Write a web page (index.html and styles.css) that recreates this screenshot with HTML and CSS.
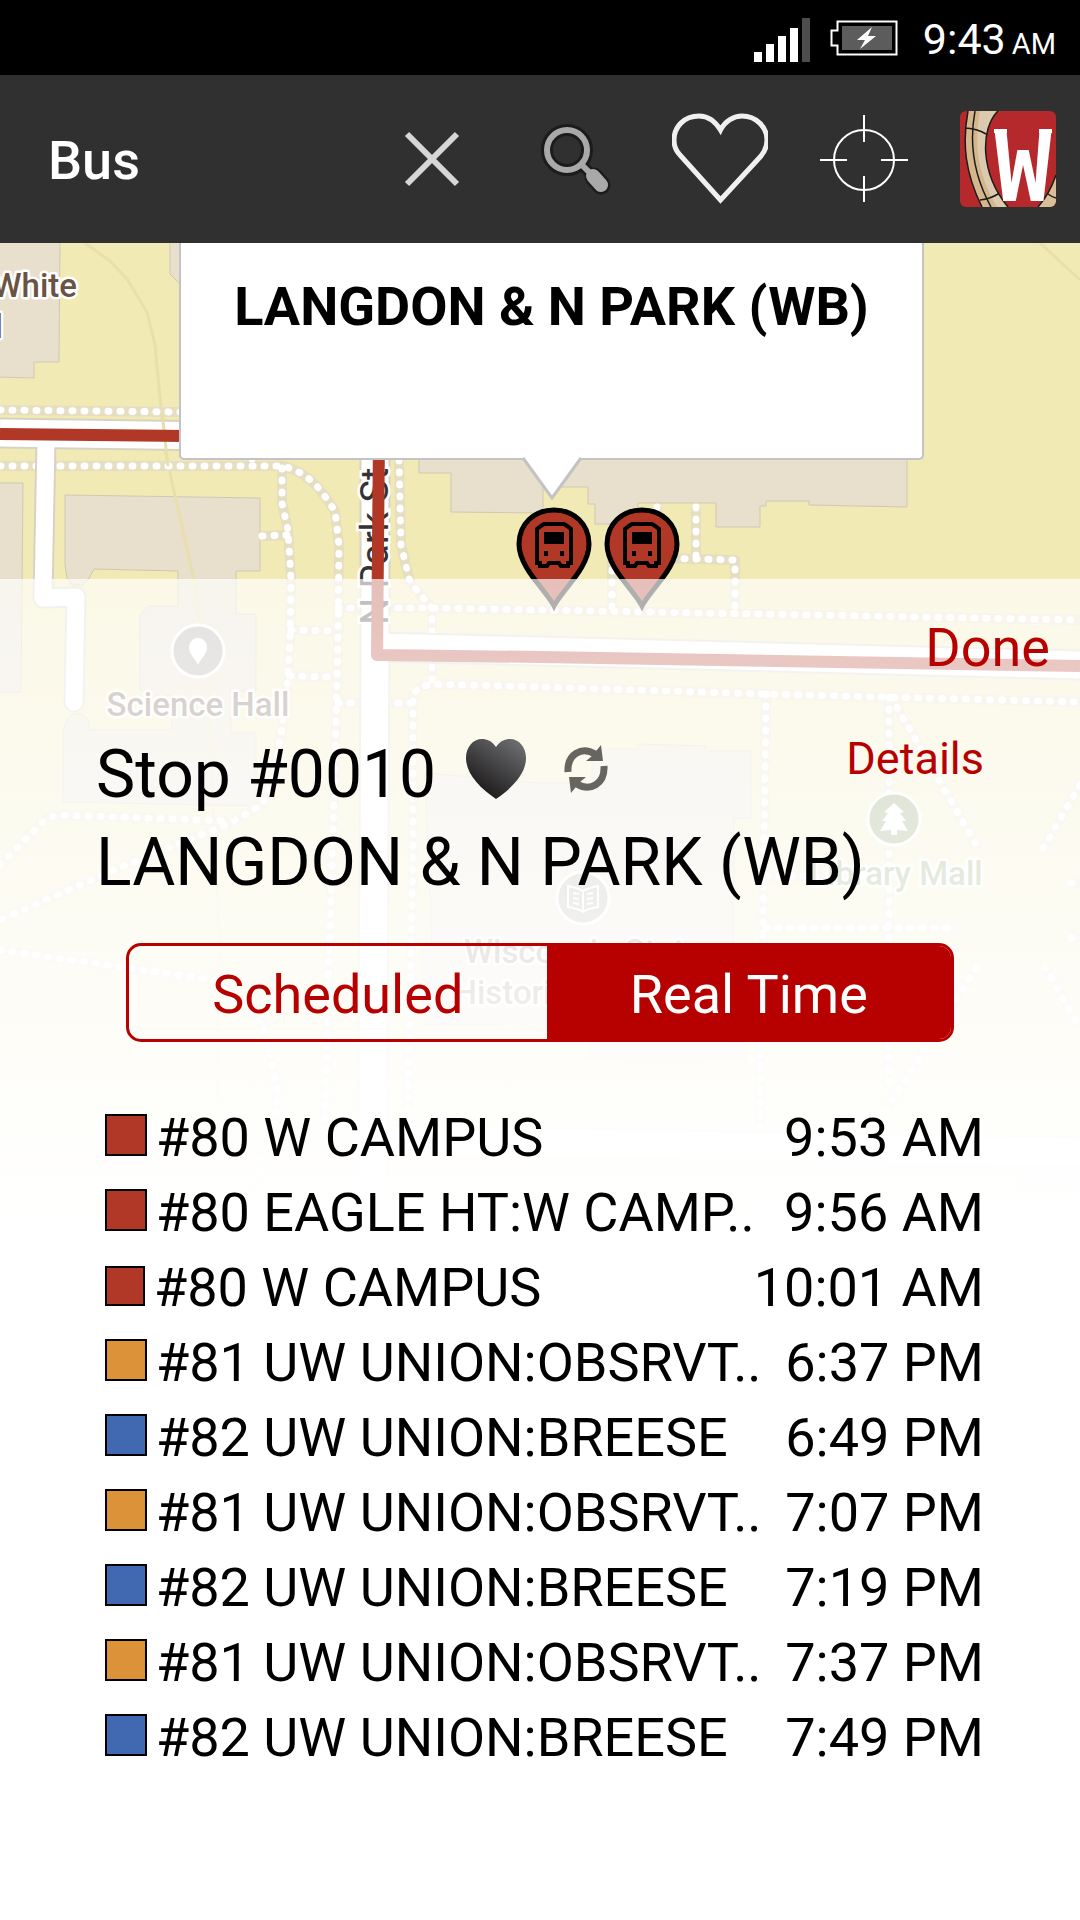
FILE: index.html
```html
<!DOCTYPE html>
<html lang="en">
<head>
  <meta charset="UTF-8" />
  <meta name="viewport" content="width=device-width, initial-scale=1.0"/>
  <title>Bus</title>
  <link rel="stylesheet" href="styles.css">
</head>
<body>
  <div class="status-bar">
    <svg class="signal" width="56" height="44" viewBox="0 0 56 44" aria-hidden="true">
      <path fill="#fff" d="M0 34h8v10H0zM12 26h8v18h-8zM24 18h8v26h-8zM36 10h8v34h-8z"/>
      <path fill="#4d4d4d" d="M48 0h8v44h-8z"/>
    </svg>
    <svg class="battery" width="68" height="36" viewBox="0 0 68 36" aria-hidden="true">
      <path d="M7.500 1.500h59v33h-59v-9h-6v-15h6z" fill="none" stroke="#fff" stroke-width="2"/>
      <path d="M12 6h50v24H12z" fill="#5c5c5c"/>
      <path d="M42 7L27 20h8l-5 9 16-13h-8z" fill="#fff"/>
    </svg>
    <span class="clock">9:43 <small>AM</small></span>
  </div>

  <header class="top-bar">
    <h1>Bus</h1>
    <button type="button" aria-label="Close">
      <svg viewBox="0 0 96 96"><path d="M23 23L73 73M73 23L23 73" stroke="#d6d6d6" stroke-width="6"/></svg>
    </button>
    <button type="button" aria-label="Search">
      <svg viewBox="0 0 96 96">
        <g fill="none" stroke="#1c1c1c">
          <circle cx="39" cy="39" r="20" stroke-width="12"/>
          <path d="M54 54l10 10" stroke-width="11"/>
          <path d="M66 66l7 8" stroke-width="19" stroke-linecap="round"/>
        </g>
        <g fill="none" stroke="#a9a9a9">
          <circle cx="39" cy="39" r="20" stroke-width="6"/>
          <path d="M54 54l10 10" stroke-width="6"/>
          <path d="M65 65l8 9" stroke-width="14" stroke-linecap="round"/>
        </g>
      </svg>
    </button>
    <button type="button" aria-label="Favorites">
      <svg viewBox="0 0 96 96"><path d="M48.500 19C43 10 35 5 27 5C12 5 2 16 2 29C2 35 4 40 8 44L48.500 89L89 45C93 40 95 35 95 29C95 16 84 5 70 5C62 5 53 10 48.500 19Z" fill="none" stroke="#f0f0f0" stroke-width="5"/></svg>
    </button>
    <button type="button" aria-label="Locate me">
      <svg viewBox="0 0 96 96"><g fill="none" stroke="#fff" stroke-width="2"><circle cx="48" cy="49" r="30"/><path d="M48 4v27M48 65v26M4 49h27M65 49h27"/></g></svg>
    </button>
    <button type="button" aria-label="Home">
      <svg class="crest" viewBox="0 0 96 96">
        <path d="M0 0h96v96H0z" fill="#b5282c"/>
        <path d="M8 0C2 32 5 62 22 96H48C20 62 20 18 38 0Z" fill="#d4b68c"/>
        <path d="M20 0C14 32 17 62 37 96H46C22 64 20 22 36 0Z" fill="#dccaae"/>
        <path d="M96 64C92 76 86 87 78 96H96Z" fill="#d8bf98"/>
        <path d="M8 0C2 32 5 62 22 96M15 0C9 32 14 65 31 96M38 0C20 18 20 62 48 96M96 64C92 76 86 87 78 96M6 17Q18 18 26 23M20 89Q30 88 38 83M88 83Q92 86 96 87" fill="none" stroke="#1d1a1a" stroke-width="1.500"/>
        <path d="M34 18h13v4H34zM79 18h13v4H79z" fill="#fff"/>
        <text class="crest-letter" x="63" y="90" text-anchor="middle">W</text>
      </svg>
    </button>
  </header>

  <main class="screen">
    <svg class="map" viewBox="0 0 1080 1677" role="img" aria-label="Campus map">
      <!-- map units are screen units, with the top 243 taken by the bars -->
      <g transform="translate(0 -243)">
        <path d="M0 243H1080V1920H0Z" fill="#f2eab4"/>

        <g class="building">
          <path d="M-4 240H60L59 362H34V378L-4 377Z"/>
          <path d="M170 240V274L182 286V240Z"/>
          <path d="M-4 483H23L21 692H-4Z"/>
          <path d="M65 495L260 498V571H236V614H256V691H231V733H256V806L63 802V732L67 720L72 714H83L88 720L90 730H172V695H150L140 690V614L149 606H178V571L94 569L88 580L83 585H72L67 578L65 565Z"/>
          <path d="M419 450V473H451V512L543 513V487H588V504H595V524H638V503H716V527H760V506H766V501H809V505L907 507V450Z"/>
          <path d="M425 773L540 783H592V749H638V744L706 746V751H751V818H734L733 1042H746V1060H703V1064H629V1059H589V1042L501 1020V1025H422V950H432Z"/>
          <path d="M1018 1163H1080V1300H1018Z"/>
        </g>

        <path class="contour" d="M85 243L110 261L127 279L147 312L155 345L165 450L176 500L194 580L208 680L213 800L219 930L218 1100M1040 243L1080 280"/>

        <defs>
          <g id="paths">
            <path d="M0 410L180 412"/>
            <path d="M0 466H282C300 470 313 480 324 495L335 511L339 545L338 640L334 800L328 1000L325 1130"/>
            <path d="M252 458V467M282 468V503L288 530L291 580L290 640L287 690L281 735L273 780L262 805L228 824L114 870L0 920"/>
            <path d="M262 536L288 535"/>
            <path d="M0 865L47 818L60 815L228 821"/>
            <path d="M399 460L401 545L410 582L432 608V684"/>
            <path d="M338 608H430L540 610L1080 620"/>
            <path d="M291 630L338 631"/>
            <path d="M290 676L336 677"/>
            <path d="M338 703H412"/>
            <path d="M408 1110L413 850V694L420 687L432 684L540 687L765 694L1080 702"/>
            <path d="M657 507V556H612V610"/>
            <path d="M696 507V558M660 558L735 560V612"/>
            <path d="M766 694L763 925L760 1130"/>
            <path d="M766 928H948"/>
            <path d="M889 697V1090"/>
            <path d="M891 697L978 848"/>
            <path d="M1080 785L1042 850"/>
            <path d="M976 968L885 1112"/>
            <path d="M1045 967L1080 1028"/>
            <path d="M767 876H889"/>
            <path d="M1071 883H1080M1071 938H1080"/>
            <path d="M0 950L214 980L262 1022L278 1090L276 1120L250 1190"/>
          </g>
          <g id="streets">
            <path d="M0 433L375 438"/>
            <path d="M375 440V640L372 1260"/>
            <path d="M375 647L540 651L1080 665"/>
            <path d="M380 1140L1080 1152"/>
          </g>
        </defs>
        <use href="#paths" class="path-bed"/>
        <use href="#paths" class="path-dots"/>

        <path class="lane lane-edge" d="M46 440L43 598L76 597L74 702"/>
        <use href="#streets" class="street-edge"/>
        <path class="lane" d="M46 440L43 598L76 597L74 702"/>
        <use href="#streets" class="street"/>
        <path class="contour" d="M162 412L168 466"/>

        <text class="street-name" transform="translate(388 625) rotate(-90)">N Park St</text>

        <path class="route" d="M0 434L379 438L377 655L540 657L1080 666"/>

        <g class="place">
          <text x="77" y="297" text-anchor="end">White</text>
          <text x="3" y="338" text-anchor="end">Hall</text>
          <text x="198" y="716" text-anchor="middle">Science Hall</text>
          <text x="583" y="963" text-anchor="middle">Wisconsin State</text>
          <text x="583" y="1004" text-anchor="middle">Historical Society</text>
          <text class="park" x="896" y="885" text-anchor="middle">Library Mall</text>
        </g>

        <g stroke="#fff" stroke-width="3">
          <circle cx="198" cy="651" r="26" fill="#aca6a2"/>
          <circle cx="583" cy="898" r="26" fill="#9f9a96"/>
          <circle cx="894" cy="819" r="26" fill="#6b8845"/>
        </g>
        <path d="M198 638C192 638 189 643 189 648C189 654 195 658 198 665C201 658 207 654 207 648C207 643 204 638 198 638Z" fill="#fff"/>
        <path d="M583 891C578 888 572 887 568 886V907C574 908 579 909 583 912C587 909 592 908 598 907V886C594 887 588 888 583 891ZM583 891V911M573 893L579 894M573 898L579 899M573 903L579 904M593 893L587 894M593 898L587 899M593 903L587 904" fill="none" stroke="#fff" stroke-width="2"/>
        <path d="M894 803L904 812L900 813L906 821H902L908 831L897 830V835H891V830L880 831L886 821H882L888 813L884 812Z" fill="#fff"/>

        <defs>
          <g id="pin">
            <path d="M0 98C-8 82 -35 60 -35 36C-35 16 -20 2 0 2S35 16 35 36C35 60 8 82 0 98Z" fill="#b13726" stroke="#000" stroke-width="5"/>
            <path d="M-13 18L-10 16H10L13 18L17 21V55H14V58H7L5 55H-5L-7 58H-14V55H-17V21Z" fill="none" stroke="#000" stroke-width="4"/>
            <path d="M-10 24H10V36H-10Z"/>
            <path d="M-10 43H-6V48H-10ZM6 43H10V48H6Z"/>
          </g>
        </defs>
        <use href="#pin" x="554" y="508"/>
        <use href="#pin" x="642" y="508"/>
      </g>
    </svg>

    <div class="popup">
      <h2>LANGDON &amp; N PARK (WB)</h2>
      <svg class="popup-tip" width="60" height="44" viewBox="0 0 60 44" aria-hidden="true"><path d="M1 1L30 41L59 1" fill="#fff" stroke="#c3c3c3" stroke-width="3"/></svg>
    </div>

    <section class="sheet">
      <div class="sheet-top">
        <button type="button" class="done">Done</button>
      </div>

      <div class="stop">
        <div class="stop-line">
          <span>Stop #0010</span>
          <button type="button" aria-label="Add to favorites">
            <svg width="60" height="60" viewBox="0 0 60 60">
              <defs>
                <linearGradient id="heart" x1="0.200" y1="0.900" x2="0.800" y2="0">
                  <stop offset="0" stop-color="#1b1718"/>
                  <stop offset="1" stop-color="#6b6d6f"/>
                </linearGradient>
              </defs>
              <path d="M30 8C26 2 21 0 16 0C7 0 0 8 0 19C0 35 14 49 30 60C46 49 60 35 60 19C60 8 53 0 44 0C39 0 34 2 30 8Z" fill="url(#heart)"/>
            </svg>
          </button>
          <button type="button" class="refresh" aria-label="Refresh">
            <svg width="44" height="48" viewBox="0 0 44 48">
              <path d="M4 27C3 9 18 1 31 9M40 21C41 39 26 47 13 39" fill="none" stroke="#666560" stroke-width="7"/>
              <path d="M37 0L39 16H22L28 11ZM7 48L5 32H22L16 37Z" fill="#666560"/>
            </svg>
          </button>
          <a class="details" href="#details">Details</a>
        </div>
        <div class="stop-name">LANGDON &amp; N PARK (WB)</div>
      </div>

      <div class="tabs">
        <button type="button">Scheduled</button>
        <button type="button" class="active">Real Time</button>
      </div>

      <table class="times">
        <tr><td><i class="swatch red"></i>#80 W CAMPUS</td><td>9:53 AM</td></tr>
        <tr><td><i class="swatch red"></i>#80 EAGLE HT:W CAMP..</td><td>9:56 AM</td></tr>
        <tr><td><i class="swatch red small"></i>#80 W CAMPUS</td><td>10:01 AM</td></tr>
        <tr><td><i class="swatch orange"></i>#81 UW UNION:OBSRVT..</td><td>6:37 PM</td></tr>
        <tr><td><i class="swatch blue"></i>#82 UW UNION:BREESE</td><td>6:49 PM</td></tr>
        <tr><td><i class="swatch orange"></i>#81 UW UNION:OBSRVT..</td><td>7:07 PM</td></tr>
        <tr><td><i class="swatch blue"></i>#82 UW UNION:BREESE</td><td>7:19 PM</td></tr>
        <tr><td><i class="swatch orange"></i>#81 UW UNION:OBSRVT..</td><td>7:37 PM</td></tr>
        <tr><td><i class="swatch blue"></i>#82 UW UNION:BREESE</td><td>7:49 PM</td></tr>
      </table>
    </section>
  </main>
</body>
</html>
```
FILE: styles.css
```css
* {
  box-sizing: border-box;
}

body {
  margin: 0;
  min-height: 100vh;
  display: flex;
  flex-direction: column;
  font-family: Roboto, sans-serif;
  color: #000;
  background: #fff;
}

button {
  font: inherit;
  color: inherit;
  background: none;
  border: none;
  padding: 0;
  cursor: pointer;
}

svg {
  display: block;
}

/* status bar */
.status-bar {
  display: flex;
  justify-content: flex-end;
  align-items: center;
  height: 75px;
  padding-right: 24px;
  background: #000;
  color: #fff;
}

.signal {
  margin-top: 4px;
}

.battery {
  margin: 0 25px 0 20px;
}

.clock {
  display: flex;
  align-items: baseline;
  gap: 6px;
  padding-top: 3px;
  font-size: 43px;
}

.clock small {
  font-size: 29px;
}

/* title bar */
.top-bar {
  display: flex;
  align-items: center;
  height: 168px;
  padding-left: 48px;
  background: #303030;
  color: #fff;
}

.top-bar h1 {
  margin: 0 auto 0 0;
  padding-top: 3px;
  font-size: 54px;
  font-weight: 500;
}

.top-bar button {
  width: 144px;
  padding: 0 24px;
}

.top-bar svg {
  width: 96px;
  height: 96px;
}

.crest {
  border-radius: 6px;
}

.crest-letter {
  font-family: "DejaVu Sans Mono", monospace;
  font-size: 94px;
  font-weight: bold;
  fill: #fff;
}

/* map with the stop sheet on top of it */
.screen {
  position: relative;
  flex: 1;
  display: grid;
  grid-template-columns: 100%;
  overflow: hidden;
}

.map,
.sheet {
  grid-area: 1 / 1;
}

.map {
  width: 100%;
  height: auto;
  align-self: start;
}

.building {
  fill: #e8dfcc;
  stroke: #cfc8b4;
  stroke-width: 1;
}

.contour {
  fill: none;
  stroke: #e8dfac;
  stroke-width: 3;
}

.path-bed {
  fill: none;
  stroke: #e5dec0;
  stroke-width: 10;
  stroke-linejoin: round;
}

.path-dots {
  fill: none;
  stroke: #fff;
  stroke-width: 7;
  stroke-linecap: round;
  stroke-dasharray: 1 11;
}

.lane {
  fill: none;
  stroke: #fff;
  stroke-width: 17;
  stroke-linecap: round;
  stroke-linejoin: round;
}

.lane-edge {
  stroke: #d8d2c4;
  stroke-width: 21;
}

.street {
  fill: none;
  stroke: #fff;
  stroke-width: 27;
}

.street-edge {
  fill: none;
  stroke: #d8d2c4;
  stroke-width: 31;
}

.street-name {
  font-size: 38px;
  fill: #333;
  stroke: #fff;
  stroke-width: 5;
  paint-order: stroke;
}

.route {
  fill: none;
  stroke: #b13726;
  stroke-width: 12;
  stroke-linejoin: round;
}

.place {
  font-size: 33px;
  font-weight: 500;
  fill: #6b5344;
  stroke: #fff;
  stroke-width: 5;
  stroke-linejoin: round;
  paint-order: stroke;
}

.place .park {
  fill: #6b8845;
}

.popup {
  position: absolute;
  top: 0;
  left: 179px;
  right: 156px;
  height: 217px;
  background: #fff;
  border: 2px solid #c3c3c3;
  border-top: none;
  border-radius: 0 0 5px 5px;
  text-align: center;
}

.popup h2 {
  margin: 0;
  padding-top: 31px;
  font-size: 54px;
  line-height: 66px;
  font-weight: bold;
}

.popup-tip {
  position: absolute;
  top: 214px;
  left: calc(50% - 30px);
}

/* stop sheet */
.sheet {
  position: relative;
  margin-top: 336px;
  padding: 0 96px 120px;
  background: linear-gradient(rgba(255, 255, 255, 0.68), #fff 640px);
}

.sheet-top {
  display: flex;
  justify-content: flex-end;
  padding-top: 36px;
  margin-right: -66px;
}

.done,
.details {
  color: #b70101;
  text-decoration: none;
}

.done {
  font-size: 54px;
  line-height: 66px;
}

.stop {
  margin-top: 50px;
  font-size: 66px;
  line-height: 88px;
}

.stop-line {
  display: flex;
  align-items: center;
}

.stop-line button {
  margin: -12px 0 0 30px;
}

.stop-line .refresh {
  margin-left: 38px;
}

.details {
  margin: -32px 0 0 auto;
  font-size: 45px;
}

.tabs {
  display: flex;
  margin: 36px 30px 0;
  height: 99px;
  border: 3px solid #b70101;
  border-radius: 15px;
  overflow: hidden;
}

.tabs button {
  flex: 1 1 auto;
  padding-top: 4px;
  font-size: 54px;
  color: #b70101;
}

.tabs .active {
  background: #b70101;
  color: #fff;
}

.times {
  display: block;
  margin-top: 58px;
  font-size: 54px;
  line-height: 75px;
}

.times tbody {
  display: block;
}

.times tr {
  display: flex;
  justify-content: space-between;
  height: 75px;
}

.times td {
  padding: 0;
  white-space: nowrap;
}

.times td:first-child {
  padding-left: 9px;
}

.swatch {
  display: inline-block;
  width: 42px;
  height: 42px;
  margin-right: 9px;
  border: 2px solid #000;
}

.swatch.small {
  width: 40px;
  height: 40px;
}

.red {
  background: #b13726;
}

.orange {
  background: #dc9239;
}

.blue {
  background: #4069b1;
}
```
